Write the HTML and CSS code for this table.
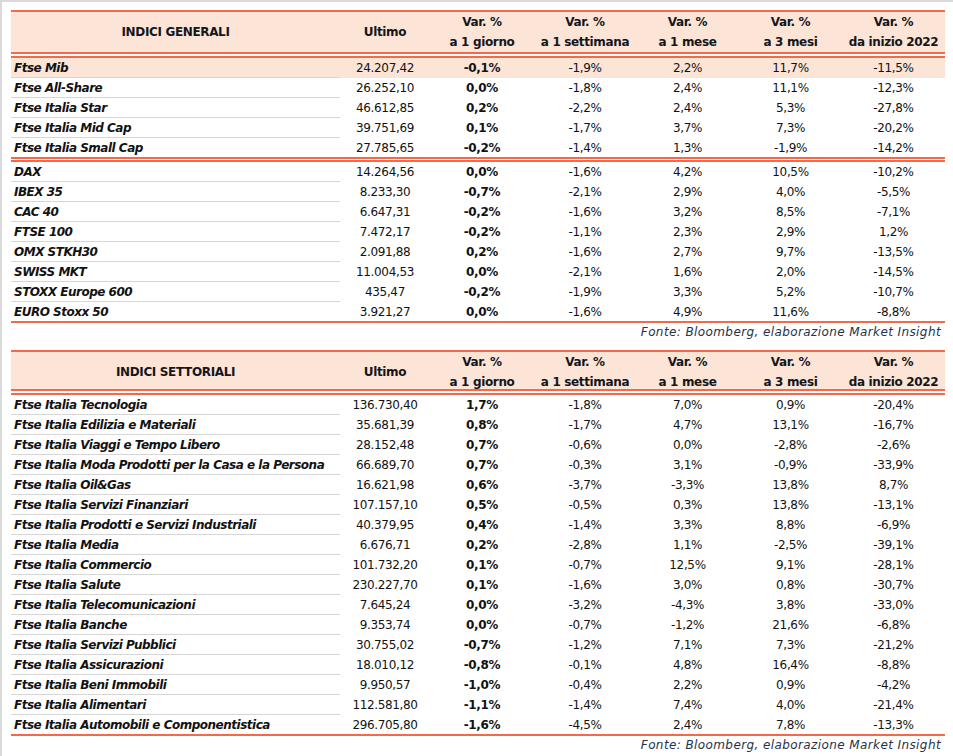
FILE: index.html
```html
<!DOCTYPE html>
<html lang="it">
<head>
<meta charset="utf-8">
<title>Indici</title>
<link rel="stylesheet" href="styles.css">
</head>
<body>
<div class="frame">
  <section class="block">
    <div class="hdr hdr-1">
      <div class="c name">INDICI GENERALI</div>
      <div class="c">Ultimo</div>
      <div class="c">Var. %<br>a 1 giorno</div>
      <div class="c">Var. %<br>a 1 settimana</div>
      <div class="c">Var. %<br>a 1 mese</div>
      <div class="c">Var. %<br>a 3 mesi</div>
      <div class="c">Var. %<br>da inizio 2022</div>
    </div>
    <div class="dbl"></div>
    <div class="grp">
      <div class="row hl"><div class="c name">Ftse Mib</div><div class="c">24.207,42</div><div class="c day">-0,1%</div><div class="c">-1,9%</div><div class="c">2,2%</div><div class="c">11,7%</div><div class="c">-11,5%</div></div>
      <div class="row"><div class="c name">Ftse All-Share</div><div class="c">26.252,10</div><div class="c day">0,0%</div><div class="c">-1,8%</div><div class="c">2,4%</div><div class="c">11,1%</div><div class="c">-12,3%</div></div>
      <div class="row"><div class="c name">Ftse Italia Star</div><div class="c">46.612,85</div><div class="c day">0,2%</div><div class="c">-2,2%</div><div class="c">2,4%</div><div class="c">5,3%</div><div class="c">-27,8%</div></div>
      <div class="row"><div class="c name">Ftse Italia Mid Cap</div><div class="c">39.751,69</div><div class="c day">0,1%</div><div class="c">-1,7%</div><div class="c">3,7%</div><div class="c">7,3%</div><div class="c">-20,2%</div></div>
      <div class="row"><div class="c name">Ftse Italia Small Cap</div><div class="c">27.785,65</div><div class="c day">-0,2%</div><div class="c">-1,4%</div><div class="c">1,3%</div><div class="c">-1,9%</div><div class="c">-14,2%</div></div>
    </div>
    <div class="dbl dbl-thin"></div>
    <div class="grp">
      <div class="row"><div class="c name">DAX</div><div class="c">14.264,56</div><div class="c day">0,0%</div><div class="c">-1,6%</div><div class="c">4,2%</div><div class="c">10,5%</div><div class="c">-10,2%</div></div>
      <div class="row"><div class="c name">IBEX 35</div><div class="c">8.233,30</div><div class="c day">-0,7%</div><div class="c">-2,1%</div><div class="c">2,9%</div><div class="c">4,0%</div><div class="c">-5,5%</div></div>
      <div class="row"><div class="c name">CAC 40</div><div class="c">6.647,31</div><div class="c day">-0,2%</div><div class="c">-1,6%</div><div class="c">3,2%</div><div class="c">8,5%</div><div class="c">-7,1%</div></div>
      <div class="row"><div class="c name">FTSE 100</div><div class="c">7.472,17</div><div class="c day">-0,2%</div><div class="c">-1,1%</div><div class="c">2,3%</div><div class="c">2,9%</div><div class="c">1,2%</div></div>
      <div class="row"><div class="c name">OMX STKH30</div><div class="c">2.091,88</div><div class="c day">0,2%</div><div class="c">-1,6%</div><div class="c">2,7%</div><div class="c">9,7%</div><div class="c">-13,5%</div></div>
      <div class="row"><div class="c name">SWISS MKT</div><div class="c">11.004,53</div><div class="c day">0,0%</div><div class="c">-2,1%</div><div class="c">1,6%</div><div class="c">2,0%</div><div class="c">-14,5%</div></div>
      <div class="row"><div class="c name">STOXX Europe 600</div><div class="c">435,47</div><div class="c day">-0,2%</div><div class="c">-1,9%</div><div class="c">3,3%</div><div class="c">5,2%</div><div class="c">-10,7%</div></div>
      <div class="row"><div class="c name">EURO Stoxx 50</div><div class="c">3.921,27</div><div class="c day">0,0%</div><div class="c">-1,6%</div><div class="c">4,9%</div><div class="c">11,6%</div><div class="c">-8,8%</div></div>
    </div>
    <div class="src">Fonte: Bloomberg, elaborazione Market Insight</div>
  </section>

  <section class="block">
    <div class="hdr hdr-2">
      <div class="c name">INDICI SETTORIALI</div>
      <div class="c">Ultimo</div>
      <div class="c">Var. %<br>a 1 giorno</div>
      <div class="c">Var. %<br>a 1 settimana</div>
      <div class="c">Var. %<br>a 1 mese</div>
      <div class="c">Var. %<br>a 3 mesi</div>
      <div class="c">Var. %<br>da inizio 2022</div>
    </div>
    <div class="dbl"></div>
    <div class="grp">
      <div class="row"><div class="c name">Ftse Italia Tecnologia</div><div class="c">136.730,40</div><div class="c day">1,7%</div><div class="c">-1,8%</div><div class="c">7,0%</div><div class="c">0,9%</div><div class="c">-20,4%</div></div>
      <div class="row"><div class="c name">Ftse Italia Edilizia e Materiali</div><div class="c">35.681,39</div><div class="c day">0,8%</div><div class="c">-1,7%</div><div class="c">4,7%</div><div class="c">13,1%</div><div class="c">-16,7%</div></div>
      <div class="row"><div class="c name">Ftse Italia Viaggi e Tempo Libero</div><div class="c">28.152,48</div><div class="c day">0,7%</div><div class="c">-0,6%</div><div class="c">0,0%</div><div class="c">-2,8%</div><div class="c">-2,6%</div></div>
      <div class="row"><div class="c name">Ftse Italia Moda Prodotti per la Casa e la Persona</div><div class="c">66.689,70</div><div class="c day">0,7%</div><div class="c">-0,3%</div><div class="c">3,1%</div><div class="c">-0,9%</div><div class="c">-33,9%</div></div>
      <div class="row"><div class="c name">Ftse Italia Oil&amp;Gas</div><div class="c">16.621,98</div><div class="c day">0,6%</div><div class="c">-3,7%</div><div class="c">-3,3%</div><div class="c">13,8%</div><div class="c">8,7%</div></div>
      <div class="row"><div class="c name">Ftse Italia Servizi Finanziari</div><div class="c">107.157,10</div><div class="c day">0,5%</div><div class="c">-0,5%</div><div class="c">0,3%</div><div class="c">13,8%</div><div class="c">-13,1%</div></div>
      <div class="row"><div class="c name">Ftse Italia Prodotti e Servizi Industriali</div><div class="c">40.379,95</div><div class="c day">0,4%</div><div class="c">-1,4%</div><div class="c">3,3%</div><div class="c">8,8%</div><div class="c">-6,9%</div></div>
      <div class="row"><div class="c name">Ftse Italia Media</div><div class="c">6.676,71</div><div class="c day">0,2%</div><div class="c">-2,8%</div><div class="c">1,1%</div><div class="c">-2,5%</div><div class="c">-39,1%</div></div>
      <div class="row"><div class="c name">Ftse Italia Commercio</div><div class="c">101.732,20</div><div class="c day">0,1%</div><div class="c">-0,7%</div><div class="c">12,5%</div><div class="c">9,1%</div><div class="c">-28,1%</div></div>
      <div class="row"><div class="c name">Ftse Italia Salute</div><div class="c">230.227,70</div><div class="c day">0,1%</div><div class="c">-1,6%</div><div class="c">3,0%</div><div class="c">0,8%</div><div class="c">-30,7%</div></div>
      <div class="row"><div class="c name">Ftse Italia Telecomunicazioni</div><div class="c">7.645,24</div><div class="c day">0,0%</div><div class="c">-3,2%</div><div class="c">-4,3%</div><div class="c">3,8%</div><div class="c">-33,0%</div></div>
      <div class="row"><div class="c name">Ftse Italia Banche</div><div class="c">9.353,74</div><div class="c day">0,0%</div><div class="c">-0,7%</div><div class="c">-1,2%</div><div class="c">21,6%</div><div class="c">-6,8%</div></div>
      <div class="row"><div class="c name">Ftse Italia Servizi Pubblici</div><div class="c">30.755,02</div><div class="c day">-0,7%</div><div class="c">-1,2%</div><div class="c">7,1%</div><div class="c">7,3%</div><div class="c">-21,2%</div></div>
      <div class="row"><div class="c name">Ftse Italia Assicurazioni</div><div class="c">18.010,12</div><div class="c day">-0,8%</div><div class="c">-0,1%</div><div class="c">4,8%</div><div class="c">16,4%</div><div class="c">-8,8%</div></div>
      <div class="row"><div class="c name">Ftse Italia Beni Immobili</div><div class="c">9.950,57</div><div class="c day">-1,0%</div><div class="c">-0,4%</div><div class="c">2,2%</div><div class="c">0,9%</div><div class="c">-4,2%</div></div>
      <div class="row"><div class="c name">Ftse Italia Alimentari</div><div class="c">112.581,80</div><div class="c day">-1,1%</div><div class="c">-1,4%</div><div class="c">7,4%</div><div class="c">4,0%</div><div class="c">-21,4%</div></div>
      <div class="row"><div class="c name">Ftse Italia Automobili e Componentistica</div><div class="c">296.705,80</div><div class="c day">-1,6%</div><div class="c">-4,5%</div><div class="c">2,4%</div><div class="c">7,8%</div><div class="c">-13,3%</div></div>
    </div>
    <div class="src">Fonte: Bloomberg, elaborazione Market Insight</div>
  </section>
</div>
</body>
</html>
```

FILE: styles.css
```css
html, body {
  margin: 0;
  padding: 0;
  background: #ffffff;
}

body {
  font-family: "DejaVu Sans", "Liberation Sans", sans-serif;
  font-size: 12px;
  color: #121212;
}

.frame {
  box-sizing: border-box;
  min-height: 100vh;
  border-top: 2px solid #d9d9d9;
  border-left: 2px solid #d9d9d9;
  padding: 8px 0 0 9px;
}

.block {
  width: 934px;
  border-top: 2px solid #f4694c;
}

.block + .block {
  margin-top: 8px;
}

.hdr,
.row {
  display: grid;
  grid-template-columns: 329px 90px 104px 102px 103px 103px 103px;
}

.hdr {
  background: #fce4d6;
  font-weight: bold;
  line-height: 20px;
  text-align: center;
  align-items: center;
  letter-spacing: -0.35px;
  color: #14161c;
}

.hdr-1 {
  height: 40px;
}

.hdr-2 {
  height: 37px;
}

.dbl {
  height: 2px;
  border-top: 2px solid #f4694c;
  border-bottom: 2px solid #f4694c;
}

.dbl-thin {
  height: 1px;
}

.row {
  height: 20px;
  text-align: center;
}

.row .c {
  display: flex;
  align-items: center;
  justify-content: center;
  letter-spacing: -0.35px;
  white-space: nowrap;
}

.row .name {
  justify-content: flex-start;
  padding-left: 3px;
  font-weight: bold;
  font-style: italic;
  letter-spacing: -0.5px;
  border-bottom: 1px solid #d6d6d6;
}

.row:last-child {
  height: 19px;
}

.row:last-child .name {
  border-bottom: 0;
}

.row .day {
  font-weight: bold;
}

.row.hl {
  background: #fce4d6;
}

.src {
  border-top: 2px solid #f4694c;
  height: 19px;
  line-height: 19px;
  text-align: right;
  padding-right: 4px;
  font-style: italic;
  letter-spacing: 0.4px;
  color: #27324a;
}
```
